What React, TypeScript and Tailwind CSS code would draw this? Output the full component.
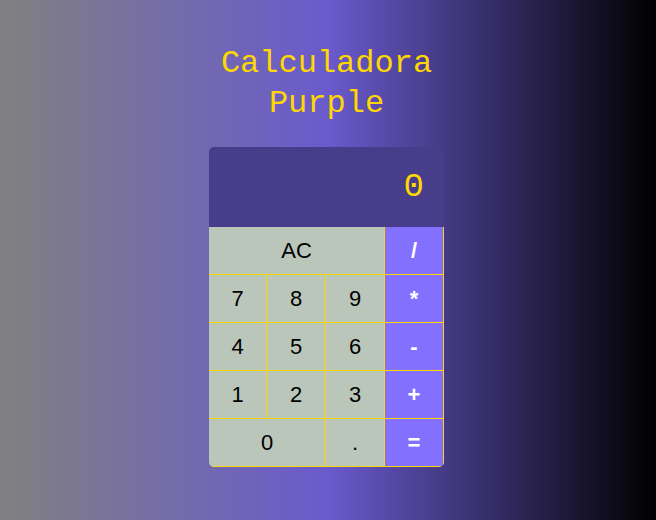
import React, { useState } from "react";

const keys: { label: string; kind: "num" | "op"; span?: string }[] = [
  { label: "AC", kind: "num", span: "col-span-3" },
  { label: "/", kind: "op" },
  { label: "7", kind: "num" },
  { label: "8", kind: "num" },
  { label: "9", kind: "num" },
  { label: "*", kind: "op" },
  { label: "4", kind: "num" },
  { label: "5", kind: "num" },
  { label: "6", kind: "num" },
  { label: "-", kind: "op" },
  { label: "1", kind: "num" },
  { label: "2", kind: "num" },
  { label: "3", kind: "num" },
  { label: "+", kind: "op" },
  { label: "0", kind: "num", span: "col-span-2" },
  { label: ".", kind: "num" },
  { label: "=", kind: "op" },
];

export default function App() {
  const [display] = useState("0");

  return (
    <div className="min-h-screen w-full flex flex-col items-center bg-[linear-gradient(to_right,#808080,#6a5acd,#000000)] pt-[44px] pr-[3px]">
      <h1 className="text-[32px] leading-[40px] text-center text-[#ffd700] font-light font-['Liberation_Mono',monospace]">
        Calculadora
        <br />
        Purple
      </h1>
      <div className="mt-[23px] w-[235px] rounded-[5px] overflow-hidden">
        <div className="h-[80px] bg-[#483d8b] flex items-center justify-end pr-[20px] text-[#ffd700] text-[34px] font-light slashed-zero font-['Liberation_Mono',monospace]">
          {display}
        </div>
        <div className="grid grid-cols-[58px_59px_59px_59px]">
          {keys.map((k) => (
            <button
              key={k.label}
              className={`h-[48px] border-r border-b border-[#ffd700] text-[22px] font-['Liberation_Sans',Arial,sans-serif] ${k.span ?? ""} ${
                k.kind === "op" ? "bg-[#8470ff] text-white font-bold" : "bg-[#bac6ba] text-black"
              }`}
            >
              {k.label}
            </button>
          ))}
        </div>
      </div>
    </div>
  );
}
